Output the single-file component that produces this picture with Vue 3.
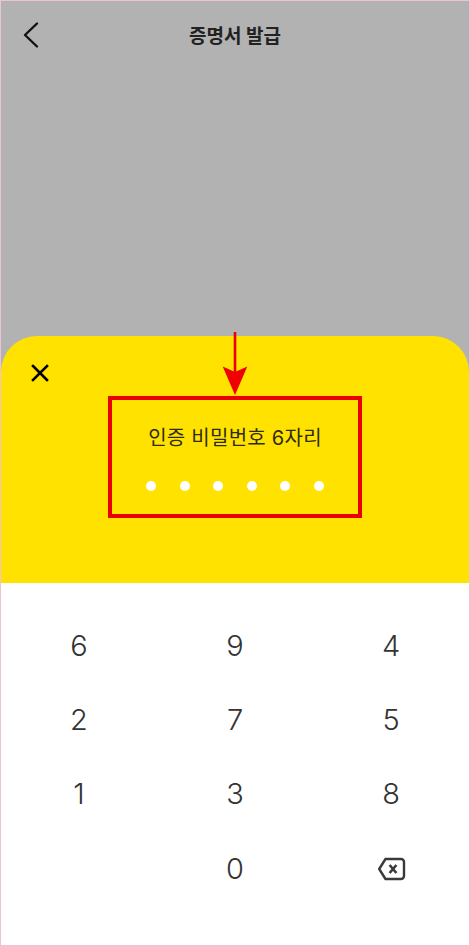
<script setup>
const keys = ['6', '9', '4', '2', '7', '5', '1', '3', '8', '', '0', 'del']
const dots = 6
</script>

<template>
  <div class="screen">
    <div class="backdrop">
      <header class="bar">
        <svg class="back" width="18" height="28" viewBox="0 0 18 28" fill="none">
          <path d="M15 2.500 3 14 15 25.500" stroke="#111" stroke-width="2.400" stroke-linecap="round" stroke-linejoin="round" />
        </svg>
        <h1 class="title">증명서 발급</h1>
      </header>
    </div>

    <section class="sheet">
      <svg class="close" width="20" height="20" viewBox="0 0 20 20" fill="none">
        <path d="M3 3 17 17M17 3 3 17" stroke="#000" stroke-width="2.600" stroke-linecap="square" />
      </svg>
      <div class="highlight">
        <p class="label">인증 비밀번호 6자리</p>
        <div class="dots">
          <span v-for="n in dots" :key="n" class="dot"></span>
        </div>
      </div>
    </section>

    <section class="keypad">
      <div v-for="(key, i) in keys" :key="i" class="key">
        <svg v-if="key === 'del'" class="del" width="30" height="24" viewBox="0 0 30 24" fill="none">
          <path d="M9.500 2H25A3 3 0 0 1 28 5V19A3 3 0 0 1 25 22H9.500L3.200 12Z" stroke="#3a3a3a" stroke-width="2.400" stroke-linejoin="round" />
          <path d="M13.600 8 20.400 16M20.400 8 13.600 16" stroke="#3a3a3a" stroke-width="2.600" />
        </svg>
        <template v-else>{{ key }}</template>
      </div>
    </section>

    <svg class="arrow" width="30" height="66" viewBox="0 0 30 66">
      <path d="M15 0V40" stroke="#e60000" stroke-width="2.600" />
      <path d="M2.700 34.500 15 40 27.300 34.500 15 63Z" fill="#f00000" />
    </svg>
  </div>
</template>

<style>
html, body { margin: 0; background: #fff; }
</style>

<style scoped>
.screen {
  position: relative;
  box-sizing: border-box;
  width: 470px;
  height: 946px;
  display: flex;
  flex-direction: column;
  border: 1px solid #ecc4d6;
  background: #b2b2b2;
  overflow: hidden;
  font-family: Inter, "Noto Sans CJK KR", sans-serif;
}
.backdrop {
  height: 335px;
  flex: none;
}
.bar {
  position: relative;
  height: 67px;
  display: flex;
  align-items: center;
  justify-content: center;
}
.back {
  position: absolute;
  left: 21px;
  top: 20px;
}
.title {
  margin: 0;
  font-size: 19px;
  font-weight: 700;
  color: #222;
}
.sheet {
  position: relative;
  height: 247px;
  flex: none;
  box-sizing: border-box;
  padding-top: 60px;
  display: flex;
  justify-content: center;
  align-items: flex-start;
  background: #ffe200;
  border-radius: 36px 36px 0 0;
}
.close {
  position: absolute;
  left: 29px;
  top: 27px;
}
.highlight {
  box-sizing: border-box;
  width: 254px;
  height: 122px;
  padding-top: 23.500px;
  display: flex;
  flex-direction: column;
  align-items: center;
  border: 4.500px solid #e90000;
}
.label {
  margin: 0;
  font-size: 20px;
  line-height: 28px;
  color: #2e2c10;
  letter-spacing: 0.25px;
}
.dots {
  margin-top: 29.500px;
  display: flex;
  gap: 23.600px;
}
.dot {
  width: 10px;
  height: 10px;
  border-radius: 50%;
  background: #fff;
}
.keypad {
  flex: 1;
  box-sizing: border-box;
  padding-top: 25px;
  display: grid;
  grid-template-columns: repeat(3, 156px);
  grid-auto-rows: 74.400px;
  align-content: start;
  background: #fff;
}
.key {
  display: flex;
  align-items: center;
  justify-content: center;
  font-size: 29px;
  font-weight: 350;
  color: #333;
}
.del {
  margin-top: 1px;
}
.arrow {
  position: absolute;
  left: 219px;
  top: 331px;
}
</style>
